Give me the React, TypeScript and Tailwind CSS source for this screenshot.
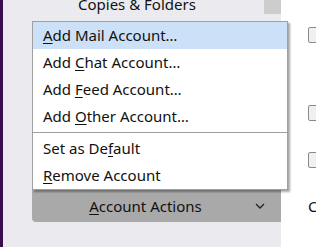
const font = { fontFamily: '"Noto Sans", "Open Sans", sans-serif' };

function Key({ children }: { children: string }) {
    return <span className="underline underline-offset-2 decoration-1">{children}</span>;
}

const items = [
    { pre: "", key: "A", post: "dd Mail Account…", active: true },
    { pre: "Add ", key: "C", post: "hat Account…" },
    { pre: "Add ", key: "F", post: "eed Account…" },
    { pre: "Add ", key: "O", post: "ther Account…" },
];

const items2 = [
    { pre: "Set as De", key: "f", post: "ault" },
    { pre: "", key: "R", post: "emove Account" },
];

export default function App() {
    return <div className="relative flex h-[247px] w-[316px] overflow-hidden bg-white text-[15px] text-[#111]" style={font}>
        <div className="w-[3px] shrink-0 bg-[#3a0d4e]" />
        <div className="relative flex w-[278px] shrink-0 flex-col bg-[#ebebef]">
            <div className="absolute right-0 top-0 h-[14px] w-[17px] bg-[#cdcdcd]" />
            <div className="-mt-[7px] h-[22px] pl-[75px] leading-[22px]">Copies &amp; Folders</div>
            <div className="mt-[175px] ml-[29px] flex h-[32px] w-[249px] items-center rounded-bl-[4px] bg-[#a9a9a9]">
                <span className="flex-1 pl-[4px] text-center"><Key>A</Key>ccount Actions</span>
                <svg width="10" height="6" viewBox="0 0 10 6" className="mr-[16px]">
                    <path d="M1 1 L5 5 L9 1" fill="none" stroke="#222" strokeWidth="1.3" />
                </svg>
            </div>
        </div>
        <div className="flex flex-1 flex-col pl-[27px]">
            <div className="mt-[27px] h-[16px] w-[14px] rounded-[2px] border border-[#8a8a8a] bg-[#f0f0f0]" />
            <div className="mt-[62px] h-[16px] w-[14px] rounded-[2px] border border-[#8a8a8a] bg-[#f0f0f0]" />
            <div className="mt-[31px] h-[16px] w-[14px] rounded-[2px] border border-[#8a8a8a] bg-[#f0f0f0]" />
            <div className="mt-[28px] leading-[20px]">C</div>
        </div>

        <div className="absolute left-[32px] top-[21px] w-[256px] border border-[#a0a0a0] bg-white shadow-[2px_2px_2px_rgba(0,0,0,0.35)]">
            {items.map((it) => (
                <div key={it.key} className={`flex h-[27px] items-center pl-[10px] ${it.active ? "bg-[#cce0f7]" : ""}`}>
                    <span>{it.pre}<Key>{it.key}</Key>{it.post}</span>
                </div>
            ))}
            <div className="flex h-[5px] items-center">
                <div className="h-px w-full bg-[#a0a0a0]" />
            </div>
            {items2.map((it) => (
                <div key={it.key} className="flex h-[27px] items-center pl-[10px]">
                    <span>{it.pre}<Key>{it.key}</Key>{it.post}</span>
                </div>
            ))}
        </div>
    </div>
}
